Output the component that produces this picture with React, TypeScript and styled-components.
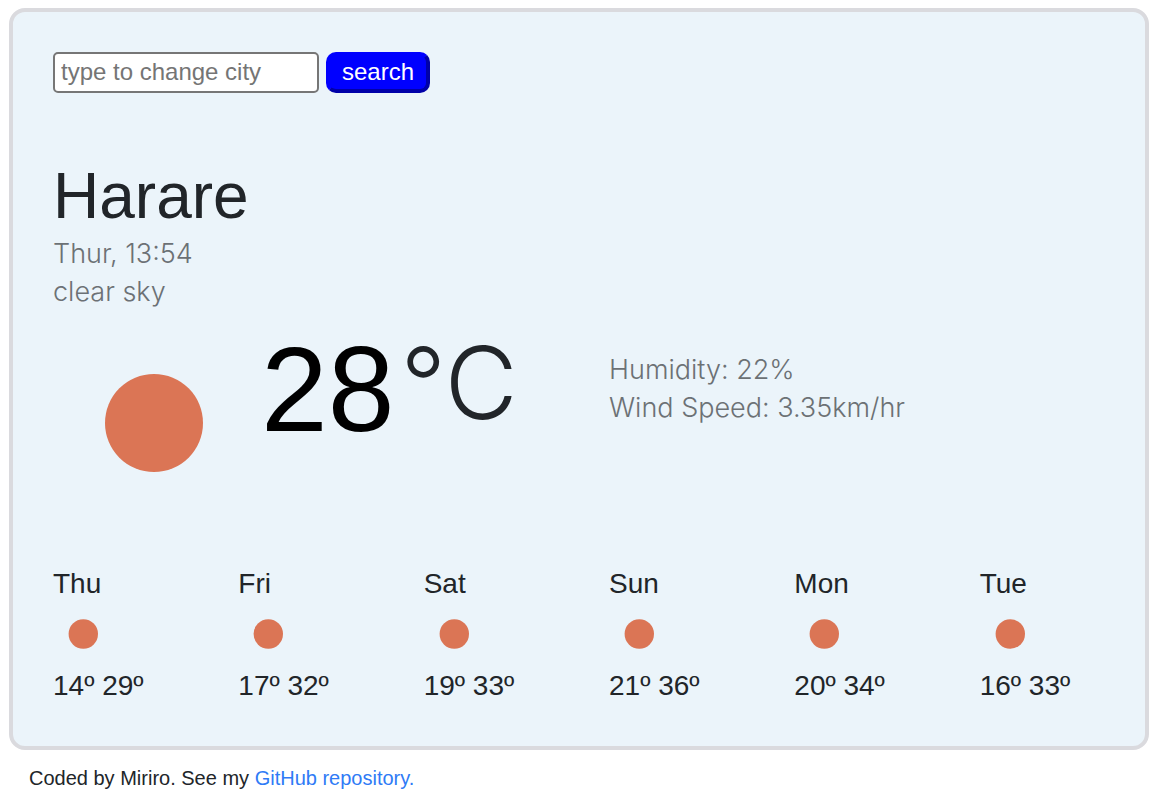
import React from "react";
import styled, { createGlobalStyle } from "styled-components";

const GlobalStyle = createGlobalStyle`
  *, *::before, *::after { box-sizing: border-box; }
  body {
    margin: 0;
    background: #fff;
    color: #212529;
    font-family: "Liberation Sans", Arial, sans-serif;
    font-size: 28px;
    line-height: 38px;
  }
`;

const Page = styled.div`
  padding: 8px 7px 0 9px;
`;

const Card = styled.main`
  padding: 40px 40px 41px;
  border: 4px solid #dadade;
  border-radius: 16px;
  background: #ebf4fa;
`;

const SearchForm = styled.form`
  display: flex;
  gap: 7px;
  height: 41px;
`;

const CityInput = styled.input`
  width: 266px;
  padding: 0 6px 2px;
  border: 2px solid #767676;
  border-radius: 5px;
  background: #fff;
  color: #212529;
  font: 24px "Liberation Sans", Arial, sans-serif;
  &::placeholder { color: #757575; opacity: 1; }
`;

const SearchButton = styled.button`
  width: 104px;
  padding: 0 0 2px;
  border: 4px solid #00f;
  border-color: #00f #0000a8 #0000a8 #00f;
  border-radius: 10px;
  background: #00f;
  color: #fff;
  font: 24px "Liberation Sans", Arial, sans-serif;
`;

const City = styled.h1`
  margin: 65px 0 1px;
  font-size: 64px;
  font-weight: 400;
  line-height: 76px;
`;

const Details = styled.ul`
  margin: 0;
  padding: 0;
  list-style: none;
  color: #6c7175;
  font-family: Inter, "Liberation Sans", sans-serif;
  font-size: 27px;
  font-weight: 300;
`;

const Row = styled.section<{ $columns: number }>`
  display: grid;
  grid-template-columns: repeat(${(p) => p.$columns}, minmax(0, 1fr));
  margin: 0 -30px;
`;

const Column = styled.div`
  padding: 0 30px;
`;

const Current = styled(Row)`
  padding: 12px 0 42px;
`;

const Readings = styled(Column)`
  padding-top: 28px;
`;

const Temperature = styled(Column)`
  display: flex;
  align-items: flex-start;
`;

const Degrees = styled.strong`
  margin: 6px 0 0 8px;
  color: #000;
  font-size: 120px;
  font-weight: 400;
  line-height: 120px;
`;

const Unit = styled.span`
  margin-left: 6px;
  font-family: Inter, "Liberation Sans", sans-serif;
  font-size: 100px;
  font-weight: 300;
  line-height: 120px;
`;

const Sun = styled.svg`
  display: block;
  flex: none;
`;

const DaySun = styled(Sun)`
  margin: 1px 0 3px;
`;

const Footer = styled.footer`
  padding: 13px 20px 0;
  font-size: 20px;
  line-height: 30px;
`;

const Link = styled.a`
  color: #2f7bf6;
  text-decoration: none;
`;

const forecast = [
  { day: "Thu", low: 14, high: 29 },
  { day: "Fri", low: 17, high: 32 },
  { day: "Sat", low: 19, high: 33 },
  { day: "Sun", low: 21, high: 36 },
  { day: "Mon", low: 20, high: 34 },
  { day: "Tue", low: 16, high: 33 },
];

function SunDisc() {
  return <circle cx="101" cy="100" r="49" fill="#db7555" />;
}

export default function App() {
  return (
    <>
      <GlobalStyle />
      <Page>
        <Card>
          <SearchForm onSubmit={(e) => e.preventDefault()}>
            <CityInput type="text" placeholder="type to change city" aria-label="City" />
            <SearchButton type="submit">search</SearchButton>
          </SearchForm>
          <City>Harare</City>
          <Details>
            <li>Thur, 13:54</li>
            <li>clear sky</li>
          </Details>
          <Current $columns={2}>
            <Temperature>
              <Sun width="200" height="200" viewBox="0 0 200 200" role="img" aria-label="clear sky">
                <SunDisc />
              </Sun>
              <Degrees>28</Degrees>
              <Unit>°C</Unit>
            </Temperature>
            <Readings>
              <Details>
                <li>Humidity: 22%</li>
                <li>Wind Speed: 3.35km/hr</li>
              </Details>
            </Readings>
          </Current>
          <Row $columns={6}>
            {forecast.map(({ day, low, high }) => (
              <Column key={day}>
                <div>{day}</div>
                <DaySun width="60" height="60" viewBox="0 0 200 200" role="img" aria-label="clear sky">
                  <SunDisc />
                </DaySun>
                <div>{`${low}º ${high}º`}</div>
              </Column>
            ))}
          </Row>
        </Card>
        <Footer>
          Coded by Miriro. See my <Link href="#repository">GitHub repository.</Link>
        </Footer>
      </Page>
    </>
  );
}
